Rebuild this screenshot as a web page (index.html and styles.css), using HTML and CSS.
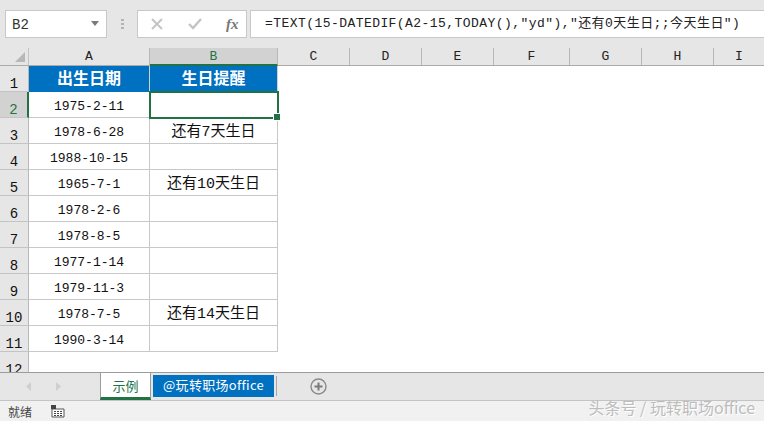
FILE: index.html
```html
<!DOCTYPE html>
<html lang="en">
<head>
  <meta charset="UTF-8">
  <title>Sheet</title>
  <link rel="stylesheet" href="styles.css">
</head>
<body>
  <div class="formula-bar">
    <div class="name-box"><span>B2</span><i class="caret"></i></div>
    <div class="grip"><i></i><i></i><i></i></div>
    <div class="fx-box">
      <svg class="fx-x" width="12" height="12" viewBox="0 0 12 12"><path d="M1 1l10 10M11 1L1 11" stroke="#c4c4c4" stroke-width="2" fill="none"/></svg>
      <svg class="fx-ok" width="14" height="12" viewBox="0 0 14 12"><path d="M1 6l4 4 8-9" stroke="#c4c4c4" stroke-width="2.4" fill="none"/></svg>
      <span class="fx-label">fx</span>
    </div>
    <div class="formula">=TEXT(15-DATEDIF(A2-15,TODAY(),"yd"),"还有0天生日;;今天生日")</div>
  </div>

  <div class="col-heads">
    <div class="corner"><i></i></div>
    <div class="col a">A</div>
    <div class="col b on">B</div>
    <div class="col c">C</div>
    <div class="col d">D</div>
    <div class="col d">E</div>
    <div class="col f">F</div>
    <div class="col d">G</div>
    <div class="col d">H</div>
    <div class="col last">I</div>
  </div>

  <div class="sheet">
    <div class="rows">
      <div class="row"><div class="num">1</div><div class="cell a title">出生日期</div><div class="cell b title">生日提醒</div></div>
      <div class="row"><div class="num on">2</div><div class="cell a">1975-2-11</div><div class="cell b selected"></div></div>
      <div class="row"><div class="num">3</div><div class="cell a">1978-6-28</div><div class="cell b">还有7天生日</div></div>
      <div class="row"><div class="num">4</div><div class="cell a">1988-10-15</div><div class="cell b"></div></div>
      <div class="row"><div class="num">5</div><div class="cell a">1965-7-1</div><div class="cell b">还有10天生日</div></div>
      <div class="row"><div class="num">6</div><div class="cell a">1978-2-6</div><div class="cell b"></div></div>
      <div class="row"><div class="num">7</div><div class="cell a">1978-8-5</div><div class="cell b"></div></div>
      <div class="row"><div class="num">8</div><div class="cell a">1977-1-14</div><div class="cell b"></div></div>
      <div class="row"><div class="num">9</div><div class="cell a">1979-11-3</div><div class="cell b"></div></div>
      <div class="row"><div class="num">10</div><div class="cell a">1978-7-5</div><div class="cell b">还有14天生日</div></div>
      <div class="row"><div class="num">11</div><div class="cell a">1990-3-14</div><div class="cell b"></div></div>
      <div class="row"><div class="num">12</div></div>
    </div>
  </div>

  <div class="tabs">
    <div class="tab-nav">
      <svg width="6" height="9" viewBox="0 0 6 9"><path d="M5 0v9L0 4.500z" fill="#cfcfcf"/></svg>
      <svg width="6" height="9" viewBox="0 0 6 9"><path d="M1 0v9l5-4.500z" fill="#cfcfcf"/></svg>
    </div>
    <div class="tab active">示例</div>
    <div class="tab blue">@玩转职场office</div>
    <div class="tab-sep"></div>
    <svg class="add" width="17" height="17" viewBox="0 0 17 17"><circle cx="8.500" cy="8.500" r="7.500" fill="none" stroke="#8a8a8a" stroke-width="1.400"/><path d="M8.500 4.500v8M4.500 8.500h8" stroke="#7a7a7a" stroke-width="2"/></svg>
  </div>

  <div class="status">
    <span class="ready">就绪</span>
    <svg width="14" height="13" viewBox="0 0 14 13"><path d="M1 4h12v8H1z" fill="#fff" stroke="#555"/><path d="M0 0h5v4H0z" fill="#444"/><path d="M3 6h2v1H3zM6 6h2v1H6zM9 6h2v1H9zM3 8h2v1H3zM6 8h2v1H6zM9 8h2v1H9zM3 10h2v1H3zM6 10h2v1H6zM9 10h2v1H9z" fill="#444"/></svg>
  </div>

  <div class="watermark">头条号 / 玩转职场office</div>
</body>
</html>
```

FILE: styles.css
```css
* {
  box-sizing: border-box;
}

body {
  margin: 0;
  width: 764px;
  height: 421px;
  overflow: hidden;
  position: relative;
  display: flex;
  flex-direction: column;
  background: #fff;
  color: #111;
  font-family: "Liberation Mono", "Noto Sans CJK SC", monospace;
  font-size: 13px;
}

/* formula bar */
.formula-bar {
  height: 48px;
  flex: none;
  display: flex;
  align-items: flex-start;
  padding: 10px 0 0 5px;
  background: #e6e6e6;
}

.name-box {
  width: 102px;
  height: 28px;
  display: flex;
  align-items: center;
  justify-content: space-between;
  padding: 2px 7px 0 6px;
  background: #fff;
  border: 1px solid #c8c8c8;
  font-size: 14px;
  color: #333;
}

.caret {
  border-left: 4px solid transparent;
  border-right: 4px solid transparent;
  border-top: 5px solid #7a7a7a;
  margin-top: -3px;
}

.grip {
  width: 30px;
  height: 28px;
  display: flex;
  flex-direction: column;
  align-items: center;
  justify-content: center;
  gap: 2px;
}

.grip i {
  width: 3px;
  height: 2px;
  background: #b4b4b4;
}

.fx-box {
  width: 110px;
  height: 28px;
  display: flex;
  align-items: center;
  background: #fff;
  border: 1px solid #c8c8c8;
  padding-left: 13px;
}

.fx-ok {
  margin-left: 25px;
}

.fx-label {
  margin-left: 24px;
  font-family: "Liberation Serif", serif;
  font-style: italic;
  font-weight: bold;
  font-size: 15px;
  color: #777;
}

.formula {
  flex: 1;
  height: 28px;
  margin-left: 3px;
  padding: 4px 0 0 14px;
  background: #fff;
  border: 1px solid #c8c8c8;
  border-right: 0;
  font-size: 13px;
  letter-spacing: 0.44px;
  line-height: 18px;
  color: #222;
  white-space: nowrap;
}

/* column headers */
.col-heads {
  height: 18px;
  flex: none;
  display: flex;
  background: #e6e6e6;
  border-bottom: 1px solid #ababab;
}

.corner {
  width: 29px;
  position: relative;
  border-right: 1px solid #c4c4c4;
}

.corner i {
  position: absolute;
  right: 3px;
  bottom: 3px;
  border-left: 10px solid transparent;
  border-bottom: 10px solid #b8b8b8;
}

.col {
  text-align: center;
  line-height: 18px;
  font-size: 13px;
  border-right: 1px solid #b8b8b8;
  color: #222;
}

.col.a { width: 121px; }
.col.b { width: 128px; }
.col.c { width: 72px; }
.col.d { width: 72px; }
.col.f { width: 76px; }
.col.last { flex: 1; border-right: 0; }

.col.on {
  height: 18px;
  background: #d2d2d2;
  color: #217346;
  border-bottom: 2px solid #217346;
}

/* cells */
.sheet {
  flex: 1;
  min-height: 0;
  overflow: hidden;
}

.row {
  height: 26px;
  display: flex;
}

.num {
  width: 29px;
  flex: none;
  padding-top: 9px;
  text-align: center;
  line-height: 18px;
  font-size: 14px;
  background: #e6e6e6;
  border-right: 1px solid #b8b8b8;
  border-bottom: 1px solid #c4c4c4;
}

.num.on {
  background: #d2d2d2;
  color: #217346;
  border-right: 2px solid #217346;
}

.cell {
  padding-top: 2px;
  line-height: 25px;
  text-align: center;
  border-right: 1px solid #c8c8c8;
  border-bottom: 1px solid #c8c8c8;
  font-size: 13px;
}

.cell.b {
  font-size: 15px;
}

.cell.a { width: 121px; }
.cell.b { width: 128px; }

.cell.title {
  background: #0070c0;
  color: #fff;
  font-weight: bold;
  font-size: 16px;
  border-color: #0070c0;
  border-right-color: #d0d0d0;
}

.cell.selected {
  position: relative;
  margin: -1px 0 0 -1px;
  width: 130px;
  height: 28px;
  border: 2px solid #217346;
  z-index: 1;
}

.cell.selected::after {
  content: "";
  position: absolute;
  right: -4px;
  bottom: -4px;
  width: 6px;
  height: 6px;
  background: #217346;
  border: 1px solid #fff;
  box-sizing: content-box;
}

/* sheet tabs */
.tabs {
  height: 28px;
  flex: none;
  display: flex;
  background: #e6e6e6;
  border-top: 1px solid #9c9c9c;
}

.tab-nav {
  width: 100px;
  display: flex;
  gap: 23px;
  padding: 9px 0 0 26px;
}

.tab-nav svg {
  display: block;
}

.tab {
  font-family: "Noto Sans CJK SC", sans-serif;
  font-size: 13px;
  white-space: nowrap;
  text-align: center;
}

.tab.active {
  width: 51px;
  height: 28px;
  margin-top: -1px;
  background: #fff;
  color: #217346;
  line-height: 25px;
  border: 1px solid #9c9c9c;
  border-bottom: 3px solid #217346;
}

.tab.blue {
  width: 121px;
  height: 22px;
  margin: 2px 0 0 2px;
  background: #0070c0;
  color: #fff;
  line-height: 19px;
  letter-spacing: 0.3px;
}

.tab-sep {
  width: 1px;
  height: 20px;
  margin: 3px 0 0 2px;
  background: #a8a8a8;
}

.add {
  margin: 5px 0 0 33px;
}

/* status bar */
.status {
  height: 21px;
  flex: none;
  display: flex;
  align-items: center;
  padding-left: 8px;
  background: #f1f1f1;
  border-top: 1px solid #c4c4c4;
}

.ready {
  font-family: "Noto Sans CJK SC", sans-serif;
  font-size: 12px;
  color: #444;
  margin-right: 19px;
}

.watermark {
  position: absolute;
  right: 9px;
  bottom: 5px;
  font-family: "Noto Sans CJK SC", sans-serif;
  font-size: 16px;
  line-height: 18px;
  color: #bdbdbd;
  text-shadow: 1px 1px 0 #fff;
  white-space: nowrap;
}
```
